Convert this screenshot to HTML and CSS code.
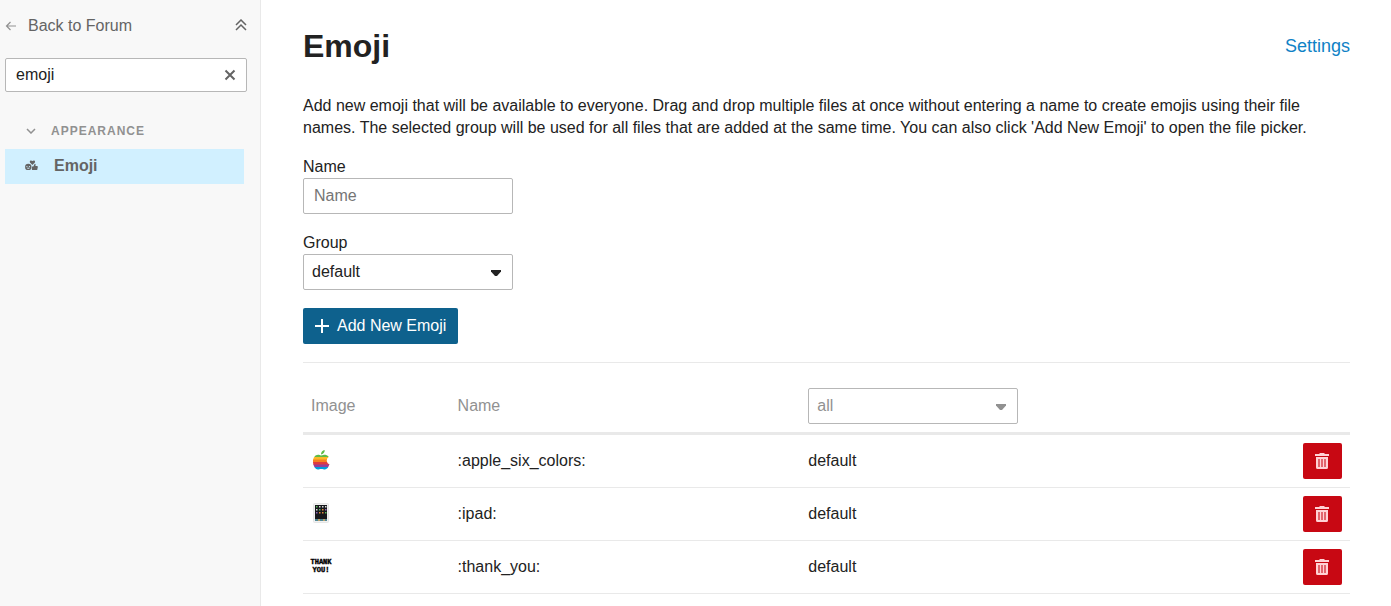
FILE: index.html
```html
<!DOCTYPE html>
<html lang="en">
<head>
  <meta charset="UTF-8">
  <meta name="viewport" content="width=device-width, initial-scale=1.0">
  <title>Emoji</title>
  <link rel="stylesheet" href="styles.css">
</head>
<body>
<svg class="sprite" aria-hidden="true">
  <symbol id="trash" viewBox="0 0 14 16">
    <path class="trash-can" d="M4.500 0h5v1H14v2H0V1h4.500zM1 4h12v10.500Q13 16 11.500 16h-9Q1 16 1 14.500z"/>
    <path class="trash-bars" d="M3 6h2v8H3zM6 6h2v8H6zM9 6h2v8H9z"/>
  </symbol>
</svg>
<div class="layout">
  <aside class="sidebar">
    <div class="sidebar-top">
      <a class="back-link" href="#">
        <svg width="12" height="12" viewBox="0 0 12 12"><path d="M11 6H1.500M5.500 2L1.500 6l4 4"/></svg>
        Back to Forum
      </a>
      <button class="icon-button" type="button" aria-label="Collapse all sections">
        <svg width="12" height="12" viewBox="0 0 12 12"><path d="M1 6l5-5 5 5M1 11l5-5 5 5"/></svg>
      </button>
    </div>
    <div class="search">
      <input type="text" value="emoji" aria-label="Filter">
      <button class="icon-button" type="button" aria-label="Clear filter">
        <svg width="12" height="12" viewBox="0 0 12 12"><path d="M1.500 1.500l9 9M10.500 1.500l-9 9"/></svg>
      </button>
    </div>
    <button class="section-header" type="button">
      <svg width="10" height="6" viewBox="0 0 10 6"><path d="M1 1l4 4 4-4"/></svg>
      Appearance
    </button>
    <a class="section-link" href="#">
      <svg width="13" height="11" viewBox="0 0 14 12">
        <path fill-rule="evenodd" d="M3.500 4a3.500 3.500 0 1 1 0 7 3.500 3.500 0 0 1 0-7zM1.500 6.500v1h1v-1zM4.200 6.500v1h1v-1zM1.500 8.500q2 2 4 0z"/>
        <path d="M8 5.500L5.300 2.600C4.500 1 6.500-.3 8 1.200 9.500-.3 11.500 1 10.700 2.600z"/>
        <path d="M7.500 7H9l1.500-3q1.300 0 1 1.500L11.200 6.500H13q1 .2.900 1.200L13.200 11H7.500z"/>
      </svg>
      Emoji
    </a>
  </aside>

  <main class="content">
    <header class="page-header">
      <h1>Emoji</h1>
      <a href="#">Settings</a>
    </header>
    <p class="description">Add new emoji that will be available to everyone. Drag and drop multiple files at once without entering a name to create emojis using their file names. The selected group will be used for all files that are added at the same time. You can also click 'Add New Emoji' to open the file picker.</p>

    <form class="emoji-form">
      <div class="field">
        <label for="emoji-name">Name</label>
        <input type="text" id="emoji-name" placeholder="Name">
      </div>
      <div class="field">
        <label for="emoji-group">Group</label>
        <div class="select">
          <select id="emoji-group"><option>default</option></select>
          <svg width="10" height="6" viewBox="0 0 10 6"><path d="M0 0h10v1.500L6 6H4L0 1.500z"/></svg>
        </div>
      </div>
      <button class="add-button" type="button">
        <svg width="14" height="14" viewBox="0 0 14 14"><path d="M7 0v14M0 7h14"/></svg>
        Add New Emoji
      </button>
    </form>

    <table class="emoji-table">
      <thead>
        <tr>
          <th class="col-image">Image</th>
          <th class="col-name">Name</th>
          <th>
            <div class="select">
              <select aria-label="Filter by group"><option>all</option></select>
              <svg width="10" height="6" viewBox="0 0 10 6"><path d="M0 0h10v1.500L6 6H4L0 1.500z"/></svg>
            </div>
          </th>
          <th class="col-action"></th>
        </tr>
      </thead>
      <tbody>
        <tr>
          <td>
            <svg class="emoji" viewBox="0 0 20 20">
              <clipPath id="apple">
                <path d="M10 5.500C12 5 13 4.500 14.500 4.700q2 .3 3.200 2-2 1.500-2 3.900 0 2.900 2.700 4Q16.500 19.500 14 19.500c-1.500 0-2-.6-3.700-.6s-2.200.6-3.500.6C4.300 19.500 2 15.500 2 11.500c0-4 2.300-6.800 5-6.800 1.300 0 2 .5 3 .8zM10 4.500C9.800 2.300 11.500.4 13.700 0c.2 2.300-1.500 4.400-3.700 4.500z"/>
              </clipPath>
              <g clip-path="url(#apple)">
                <path fill="#5fbb46" d="M0 0h20v7.500H0z"/>
                <path fill="#fcb827" d="M0 7h20v3H0z"/>
                <path fill="#f58220" d="M0 9.500h20v3H0z"/>
                <path fill="#e03a3e" d="M0 12h20v3H0z"/>
                <path fill="#963d97" d="M0 14.500h20v3H0z"/>
                <path fill="#009ddc" d="M0 17h20v3H0z"/>
              </g>
            </svg>
          </td>
          <td>:apple_six_colors:</td>
          <td>default</td>
          <td><button class="delete-button" type="button" aria-label="Delete"><svg width="14" height="16"><use href="#trash"/></svg></button></td>
        </tr>
        <tr>
          <td>
            <svg class="emoji" viewBox="0 0 20 20">
              <rect x="2.500" y=".5" width="15" height="19" rx="1" fill="#f1f1f1" stroke="#e6e6e6"/>
              <path fill="#17181c" d="M4 2h12v14H4z"/>
              <path fill="#4f8795" d="M4 16h12v2H4z"/>
              <path fill="#b9a06a" d="M7 16h2v2H7zM12 16h2v2h-2z"/>
              <path fill="#5cb85c" d="M5 3h1.500v1.500H5zM8 6h1.500v1.500H8zM14 9h1.500v1.500H14z"/>
              <path fill="#d8d8d8" d="M8 3h1.500v1.500H8zM11 3h1.500v1.500H11zM14 3h1.500v1.500H14zM5 6h1.500v1.500H5z"/>
              <path fill="#e08a3c" d="M11 6h1.500v1.500H11zM8 9h1.500v1.500H8zM11 9h1.500v1.500H11z"/>
              <path fill="#9067b8" d="M14 6h1.500v1.500H14zM5 9h1.500v1.500H5z"/>
            </svg>
          </td>
          <td>:ipad:</td>
          <td>default</td>
          <td><button class="delete-button" type="button" aria-label="Delete"><svg width="14" height="16"><use href="#trash"/></svg></button></td>
        </tr>
        <tr>
          <td>
            <svg class="emoji" viewBox="0 0 20 20">
              <text x="10" y="8">THANK</text>
              <text x="10" y="16">YOU!</text>
            </svg>
          </td>
          <td>:thank_you:</td>
          <td>default</td>
          <td><button class="delete-button" type="button" aria-label="Delete"><svg width="14" height="16"><use href="#trash"/></svg></button></td>
        </tr>
      </tbody>
    </table>
  </main>
</div>
</body>
</html>
```
FILE: styles.css
```css
* {
  box-sizing: border-box;
}
body {
  margin: 0;
  font-family: "Liberation Sans", Arial, sans-serif;
  font-size: 16px;
  line-height: 22px;
  color: #222;
  background: #fff;
}
input, select, button {
  font: inherit;
  color: inherit;
}
button {
  cursor: pointer;
}
a {
  color: #0f82c6;
  text-decoration: none;
}
.sprite {
  display: none;
}
.layout {
  display: flex;
  min-height: 100vh;
}

/* sidebar */
.sidebar {
  flex: 0 0 261px;
  padding: 15px 13px 0 5px;
  background: #f8f8f8;
  border-right: 1px solid #e9e9e9;
  color: #646464;
}
.sidebar path {
  fill: none;
  stroke: #646464;
  stroke-width: 2;
}
.sidebar-top {
  display: flex;
  align-items: center;
  justify-content: space-between;
  margin-bottom: 21px;
}
.back-link {
  display: flex;
  align-items: center;
  gap: 11px;
  color: #646464;
}
.sidebar .back-link path {
  stroke: #919191;
  stroke-width: 1.2;
}
.icon-button {
  display: flex;
  padding: 0;
  border: none;
  background: none;
}
.sidebar-top .icon-button {
  padding-bottom: 2px;
}
.sidebar-top .icon-button path {
  stroke-width: 1.5;
}
.search {
  display: flex;
  align-items: center;
  height: 34px;
  padding: 0 10px;
  background: #fff;
  border: 1px solid #b7b7b7;
  border-radius: 2px;
}
.search input {
  flex: 1;
  min-width: 0;
  padding: 0;
  border: none;
  outline: none;
  color: #222;
}
.section-header {
  display: flex;
  align-items: center;
  gap: 15px;
  margin-top: 28px;
  padding: 0 21px;
  border: none;
  background: none;
  color: #919191;
  font-size: 12px;
  font-weight: bold;
  letter-spacing: 1px;
  text-transform: uppercase;
}
.sidebar .section-header path {
  stroke: #919191;
  stroke-width: 1.5;
}
.section-link {
  display: flex;
  align-items: center;
  gap: 16px;
  height: 35px;
  margin: 7px 3px 0 0;
  padding: 0 20px 2px;
  background: #d1f0ff;
  color: #646464;
  font-weight: bold;
}
.sidebar .section-link path {
  fill: #646464;
  stroke: none;
}

/* page */
.content {
  flex: 1;
  min-width: 0;
  padding: 24px 41px 12px 42px;
}
.page-header {
  display: flex;
  align-items: center;
  justify-content: space-between;
  margin-bottom: 27px;
  font-size: 18px;
  line-height: 24px;
}
.page-header h1 {
  margin: 0;
  font-size: 32px;
  line-height: 44px;
}
.description {
  margin: 0 0 17px;
}
.emoji-form {
  padding-bottom: 18px;
  border-bottom: 1px solid #e9e9e9;
}
.field {
  margin-bottom: 18px;
}
.field label {
  display: block;
}
.field input, .select select {
  display: block;
  width: 210px;
  height: 36px;
  padding: 0 10px;
  background: #fff;
  border: 1px solid #b7b7b7;
  border-radius: 2px;
}
.field input::placeholder {
  color: #757575;
}
.select {
  position: relative;
  width: 210px;
}
.select select {
  appearance: none;
  padding: 0 8px;
}
.select svg {
  position: absolute;
  top: 16px;
  right: 12px;
  fill: currentColor;
  pointer-events: none;
}
.add-button {
  display: flex;
  align-items: center;
  gap: 8px;
  height: 36px;
  padding: 0 12px;
  background: #0e618d;
  border: none;
  border-radius: 2px;
  color: #fff;
}
.add-button path {
  fill: none;
  stroke: #fff;
  stroke-width: 2;
}

/* emoji list */
.emoji-table {
  width: 100%;
  margin-top: 17px;
  border-collapse: separate;
  border-spacing: 0;
  table-layout: fixed;
}
.emoji-table th {
  padding: 8px;
  border-bottom: 3px solid #e9e9e9;
  color: #919191;
  font-weight: normal;
  text-align: left;
}
.emoji-table td {
  padding: 8px;
  border-bottom: 1px solid #e9e9e9;
}
.col-image {
  width: 14%;
}
.col-name {
  width: 33.5%;
}
.col-action {
  width: 55px;
}
.emoji {
  display: block;
  width: 20px;
  height: 20px;
  margin-bottom: 2px;
  overflow: visible;
}
.emoji text {
  font-family: "Liberation Mono", monospace;
  font-size: 7px;
  font-weight: bold;
  fill: #000;
  stroke: #000;
  stroke-width: 0.4;
  text-anchor: middle;
}
.delete-button {
  display: flex;
  align-items: center;
  justify-content: center;
  width: 39px;
  height: 36px;
  padding: 0 1px 0 0;
  background: #c80813;
  border: none;
  border-radius: 2px;
}
.trash-can {
  fill: #ffd2d5;
}
.trash-bars {
  fill: #e2656d;
}
```
